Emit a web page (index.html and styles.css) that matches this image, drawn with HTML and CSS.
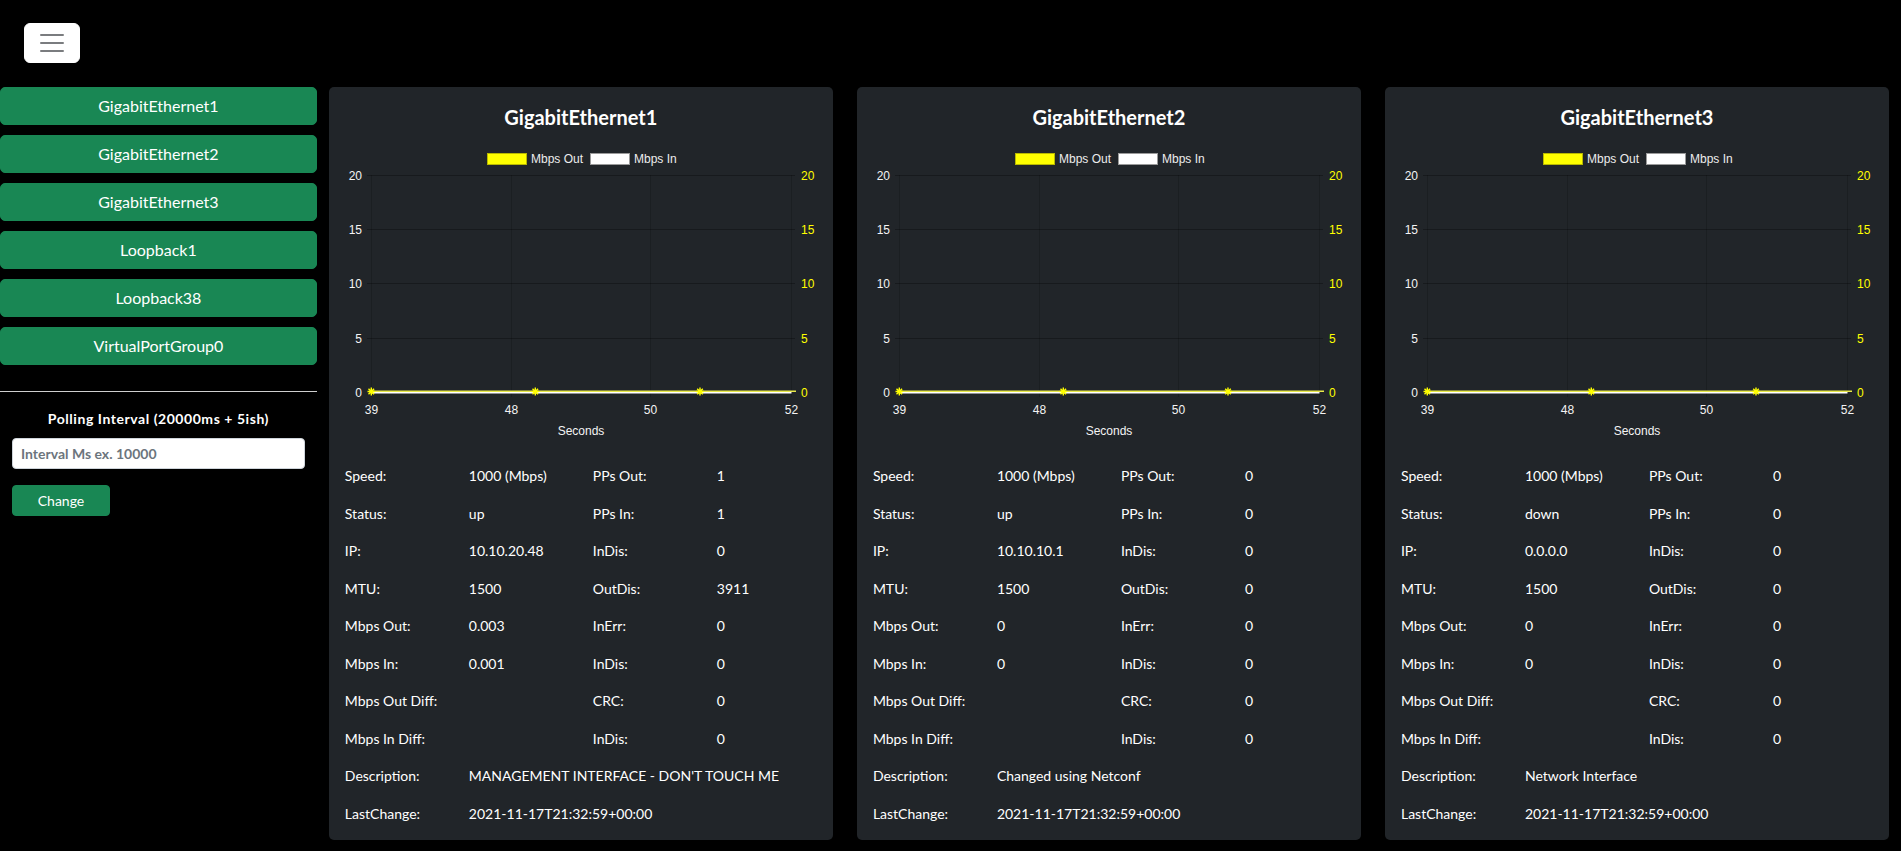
FILE: index.html
```html
<!DOCTYPE html>
<html lang="en">
<head>
<meta charset="utf-8">
<title>Interfaces</title>
<link rel="stylesheet" href="styles.css">
</head>
<body>
<nav class="topbar">
  <button class="toggler" type="button" aria-label="Toggle navigation">
    <svg class="toggler-icon" width="30" height="30" viewBox="0 0 30 30"><path d="M4 7h22M4 15h22M4 23h22" stroke="rgba(33,37,41,0.6)" stroke-width="2" stroke-linecap="round" fill="none"/></svg>
  </button>
</nav>
<div class="layout">
  <aside class="sidebar">
    <div class="iface-list">
      <button class="iface-btn">GigabitEthernet1</button>
      <button class="iface-btn">GigabitEthernet2</button>
      <button class="iface-btn">GigabitEthernet3</button>
      <button class="iface-btn">Loopback1</button>
      <button class="iface-btn">Loopback38</button>
      <button class="iface-btn">VirtualPortGroup0</button>
    </div>
    <hr class="divider">
    <form class="poll-form">
      <label class="poll-label">Polling Interval (20000ms + 5ish)</label>
      <input class="poll-input" type="text" placeholder="Interval Ms ex. 10000">
      <button class="btn-change" type="button">Change</button>
    </form>
  </aside>
  <main class="cards">
    <div class="card-col">
      <section class="card">
        <h5 class="card-title">GigabitEthernet1</h5>
        <svg class="chart" width="472" height="317" viewBox="0 0 472 317">
          <g class="grid-h"><line x1="22" y1="35.5" x2="450" y2="35.5"/><line x1="22" y1="89.5" x2="450" y2="89.5"/><line x1="22" y1="143.5" x2="450" y2="143.5"/><line x1="22" y1="198.5" x2="450" y2="198.5"/></g>
          <g class="grid-v"><line x1="26.5" y1="35" x2="26.5" y2="257"/><line x1="166.5" y1="35" x2="166.5" y2="257"/><line x1="305.5" y1="35" x2="305.5" y2="257"/><line x1="446.5" y1="35" x2="446.5" y2="257"/></g>
          <rect class="leg-out" x="142.5" y="13.5" width="39" height="11"/><text class="leg-text" x="186" y="23">Mbps Out</text>
          <rect class="leg-in" x="245.5" y="13.5" width="39" height="11"/><text class="leg-text" x="289" y="23">Mbps In</text>
          <g class="ticks-l"><text x="17" y="39.5">20</text><text x="17" y="94">15</text><text x="17" y="148">10</text><text x="17" y="202.5">5</text><text x="17" y="256.5">0</text></g>
          <g class="ticks-r"><text x="456" y="39.5">20</text><text x="456" y="94">15</text><text x="456" y="148">10</text><text x="456" y="202.5">5</text><text x="456" y="256.5">0</text></g>
          <g class="ticks-x"><text x="26.5" y="273.5">39</text><text x="166.5" y="273.5">48</text><text x="305.5" y="273.5">50</text><text x="446.5" y="273.5">52</text></g>
          <text class="axis-title" x="236" y="295">Seconds</text>
          <line class="line-out" x1="26" y1="251.3" x2="451" y2="251.3"/>
          <line class="line-in" x1="26" y1="252.8" x2="446.5" y2="252.8"/>
          <g class="stars"><path d="M26.3 247.5v8M22.5 251.5h7.6M23.5 248.7l5.6 5.6M29.1 248.7l-5.6 5.6"/><path d="M190.3 247.5v8M186.5 251.5h7.6M187.5 248.7l5.6 5.6M193.1 248.7l-5.6 5.6"/><path d="M355 247.5v8M351.2 251.5h7.6M352.2 248.7l5.6 5.6M357.8 248.7l-5.6 5.6"/></g>
        </svg>
        <div class="details">
          <span>Speed:</span><span>1000 (Mbps)</span><span>PPs Out:</span><span>1</span>
          <span>Status:</span><span>up</span><span>PPs In:</span><span>1</span>
          <span>IP:</span><span>10.10.20.48</span><span>InDis:</span><span>0</span>
          <span>MTU:</span><span>1500</span><span>OutDis:</span><span>3911</span>
          <span>Mbps Out:</span><span>0.003</span><span>InErr:</span><span>0</span>
          <span>Mbps In:</span><span>0.001</span><span>InDis:</span><span>0</span>
          <span>Mbps Out Diff:</span><span></span><span>CRC:</span><span>0</span>
          <span>Mbps In Diff:</span><span></span><span>InDis:</span><span>0</span>
          <span>Description:</span><span class="wide">MANAGEMENT INTERFACE - DON'T TOUCH ME</span>
          <span>LastChange:</span><span class="wide">2021-11-17T21:32:59+00:00</span>
        </div>
      </section>
    </div>
    <div class="card-col">
      <section class="card">
        <h5 class="card-title">GigabitEthernet2</h5>
        <svg class="chart" width="472" height="317" viewBox="0 0 472 317">
          <g class="grid-h"><line x1="22" y1="35.5" x2="450" y2="35.5"/><line x1="22" y1="89.5" x2="450" y2="89.5"/><line x1="22" y1="143.5" x2="450" y2="143.5"/><line x1="22" y1="198.5" x2="450" y2="198.5"/></g>
          <g class="grid-v"><line x1="26.5" y1="35" x2="26.5" y2="257"/><line x1="166.5" y1="35" x2="166.5" y2="257"/><line x1="305.5" y1="35" x2="305.5" y2="257"/><line x1="446.5" y1="35" x2="446.5" y2="257"/></g>
          <rect class="leg-out" x="142.5" y="13.5" width="39" height="11"/><text class="leg-text" x="186" y="23">Mbps Out</text>
          <rect class="leg-in" x="245.5" y="13.5" width="39" height="11"/><text class="leg-text" x="289" y="23">Mbps In</text>
          <g class="ticks-l"><text x="17" y="39.5">20</text><text x="17" y="94">15</text><text x="17" y="148">10</text><text x="17" y="202.5">5</text><text x="17" y="256.5">0</text></g>
          <g class="ticks-r"><text x="456" y="39.5">20</text><text x="456" y="94">15</text><text x="456" y="148">10</text><text x="456" y="202.5">5</text><text x="456" y="256.5">0</text></g>
          <g class="ticks-x"><text x="26.5" y="273.5">39</text><text x="166.5" y="273.5">48</text><text x="305.5" y="273.5">50</text><text x="446.5" y="273.5">52</text></g>
          <text class="axis-title" x="236" y="295">Seconds</text>
          <line class="line-out" x1="26" y1="251.3" x2="451" y2="251.3"/>
          <line class="line-in" x1="26" y1="252.8" x2="446.5" y2="252.8"/>
          <g class="stars"><path d="M26.3 247.5v8M22.5 251.5h7.6M23.5 248.7l5.6 5.6M29.1 248.7l-5.6 5.6"/><path d="M190.3 247.5v8M186.5 251.5h7.6M187.5 248.7l5.6 5.6M193.1 248.7l-5.6 5.6"/><path d="M355 247.5v8M351.2 251.5h7.6M352.2 248.7l5.6 5.6M357.8 248.7l-5.6 5.6"/></g>
        </svg>
        <div class="details">
          <span>Speed:</span><span>1000 (Mbps)</span><span>PPs Out:</span><span>0</span>
          <span>Status:</span><span>up</span><span>PPs In:</span><span>0</span>
          <span>IP:</span><span>10.10.10.1</span><span>InDis:</span><span>0</span>
          <span>MTU:</span><span>1500</span><span>OutDis:</span><span>0</span>
          <span>Mbps Out:</span><span>0</span><span>InErr:</span><span>0</span>
          <span>Mbps In:</span><span>0</span><span>InDis:</span><span>0</span>
          <span>Mbps Out Diff:</span><span></span><span>CRC:</span><span>0</span>
          <span>Mbps In Diff:</span><span></span><span>InDis:</span><span>0</span>
          <span>Description:</span><span class="wide">Changed using Netconf</span>
          <span>LastChange:</span><span class="wide">2021-11-17T21:32:59+00:00</span>
        </div>
      </section>
    </div>
    <div class="card-col">
      <section class="card">
        <h5 class="card-title">GigabitEthernet3</h5>
        <svg class="chart" width="472" height="317" viewBox="0 0 472 317">
          <g class="grid-h"><line x1="22" y1="35.5" x2="450" y2="35.5"/><line x1="22" y1="89.5" x2="450" y2="89.5"/><line x1="22" y1="143.5" x2="450" y2="143.5"/><line x1="22" y1="198.5" x2="450" y2="198.5"/></g>
          <g class="grid-v"><line x1="26.5" y1="35" x2="26.5" y2="257"/><line x1="166.5" y1="35" x2="166.5" y2="257"/><line x1="305.5" y1="35" x2="305.5" y2="257"/><line x1="446.5" y1="35" x2="446.5" y2="257"/></g>
          <rect class="leg-out" x="142.5" y="13.5" width="39" height="11"/><text class="leg-text" x="186" y="23">Mbps Out</text>
          <rect class="leg-in" x="245.5" y="13.5" width="39" height="11"/><text class="leg-text" x="289" y="23">Mbps In</text>
          <g class="ticks-l"><text x="17" y="39.5">20</text><text x="17" y="94">15</text><text x="17" y="148">10</text><text x="17" y="202.5">5</text><text x="17" y="256.5">0</text></g>
          <g class="ticks-r"><text x="456" y="39.5">20</text><text x="456" y="94">15</text><text x="456" y="148">10</text><text x="456" y="202.5">5</text><text x="456" y="256.5">0</text></g>
          <g class="ticks-x"><text x="26.5" y="273.5">39</text><text x="166.5" y="273.5">48</text><text x="305.5" y="273.5">50</text><text x="446.5" y="273.5">52</text></g>
          <text class="axis-title" x="236" y="295">Seconds</text>
          <line class="line-out" x1="26" y1="251.3" x2="451" y2="251.3"/>
          <line class="line-in" x1="26" y1="252.8" x2="446.5" y2="252.8"/>
          <g class="stars"><path d="M26.3 247.5v8M22.5 251.5h7.6M23.5 248.7l5.6 5.6M29.1 248.7l-5.6 5.6"/><path d="M190.3 247.5v8M186.5 251.5h7.6M187.5 248.7l5.6 5.6M193.1 248.7l-5.6 5.6"/><path d="M355 247.5v8M351.2 251.5h7.6M352.2 248.7l5.6 5.6M357.8 248.7l-5.6 5.6"/></g>
        </svg>
        <div class="details">
          <span>Speed:</span><span>1000 (Mbps)</span><span>PPs Out:</span><span>0</span>
          <span>Status:</span><span>down</span><span>PPs In:</span><span>0</span>
          <span>IP:</span><span>0.0.0.0</span><span>InDis:</span><span>0</span>
          <span>MTU:</span><span>1500</span><span>OutDis:</span><span>0</span>
          <span>Mbps Out:</span><span>0</span><span>InErr:</span><span>0</span>
          <span>Mbps In:</span><span>0</span><span>InDis:</span><span>0</span>
          <span>Mbps Out Diff:</span><span></span><span>CRC:</span><span>0</span>
          <span>Mbps In Diff:</span><span></span><span>InDis:</span><span>0</span>
          <span>Description:</span><span class="wide">Network Interface</span>
          <span>LastChange:</span><span class="wide">2021-11-17T21:32:59+00:00</span>
        </div>
      </section>
    </div>
  </main>
</div>
</body>
</html>
```
FILE: styles.css
```css
* { box-sizing: border-box; }
html, body { margin: 0; padding: 0; }
body {
  background: #000;
  color: #fff;
  font-family: Lato, "Noto Sans", sans-serif;
  font-size: 16px;
  line-height: 1.5;
}
.topbar {
  padding: 23px 24px 24px;
  display: flex;
}
.toggler {
  width: 56px;
  height: 40px;
  padding: 4px 12px;
  background: #fff;
  border: 1px solid #fff;
  border-radius: 6px;
  display: flex;
  align-items: center;
  justify-content: center;
}
.toggler-icon { display: block; }

.layout { display: flex; align-items: flex-start; }
.sidebar { flex: 0 0 16.6667%; width: 16.6667%; }
.iface-list { display: flex; flex-direction: column; }
.iface-btn {
  display: block;
  width: 100%;
  height: 38px;
  margin: 0 0 10px;
  padding: 6px 12px;
  background: #198754;
  border: 1px solid #198754;
  border-radius: 5px;
  color: #fff;
  font-family: inherit;
  font-size: 16px;
  line-height: 24px;
  text-align: center;
}
.divider {
  margin: 16px 0 0;
  border: 0;
  border-top: 1px solid #cfcfcf;
  height: 0;
}
.poll-form { padding: 16px 12px 0; display: flex; flex-direction: column; align-items: flex-start; }
.poll-label {
  display: block;
  width: 100%;
  text-align: center;
  font-weight: 700;
  font-size: 14px;
  line-height: 21px;
  letter-spacing: 0.55px;
}
.poll-input {
  margin-top: 9px;
  width: 100%;
  height: 31px;
  padding: 4px 8px;
  border: 1px solid #ced4da;
  border-radius: 4px;
  background: #fff;
  font-family: inherit;
  font-size: 14px;
  font-weight: 700;
  line-height: 21px;
  color: #212529;
}
.poll-input::placeholder { color: #6c757d; opacity: 1; }
.btn-change {
  margin-top: 16px;
  width: 98px;
  height: 31px;
  padding: 4px 8px;
  background: #198754;
  border: 1px solid #198754;
  border-radius: 4px;
  color: #fff;
  font-family: inherit;
  font-size: 14px;
  line-height: 21px;
}

.cards { flex: 1; display: grid; grid-template-columns: repeat(3, 1fr); }
.card-col { padding: 0 12px; }
.card {
  background: #212529;
  border-radius: 5px;
  padding: 16px 16px 8px;
}
.card-title {
  margin: 2px 0 11px;
  text-align: center;
  font-size: 20px;
  font-weight: 700;
  line-height: 24px;
}
.chart { display: block; font-family: "Liberation Sans", Arial, sans-serif; font-size: 12px; }
.grid-h line { stroke: rgba(0,0,0,0.28); stroke-width: 1; }
.grid-v line { stroke: rgba(0,0,0,0.16); stroke-width: 1; }
.leg-out { fill: #ffff00; stroke: #b8b800; stroke-width: 1; }
.leg-in { fill: #ffffff; stroke: #9a9a9a; stroke-width: 1; }
.leg-text { fill: #ededed; }
.ticks-l text { fill: #f4f4f4; text-anchor: end; }
.ticks-r text { fill: #ffff00; text-anchor: start; }
.ticks-x text { fill: #f4f4f4; text-anchor: middle; }
.axis-title { fill: #f4f4f4; text-anchor: middle; }
.line-out { stroke: #e8e84a; stroke-width: 1.5; }
.line-in { stroke: #ffffff; stroke-width: 1.6; }
.stars path { stroke: #ffff00; stroke-width: 1.4; fill: none; }

.details {
  display: grid;
  grid-template-columns: 124px 124px 124px 100px;
  grid-auto-rows: 37.5px;
  align-items: center;
  font-size: 14px;
  line-height: 21px;
}
.details .wide { grid-column: span 3; white-space: nowrap; }
```
